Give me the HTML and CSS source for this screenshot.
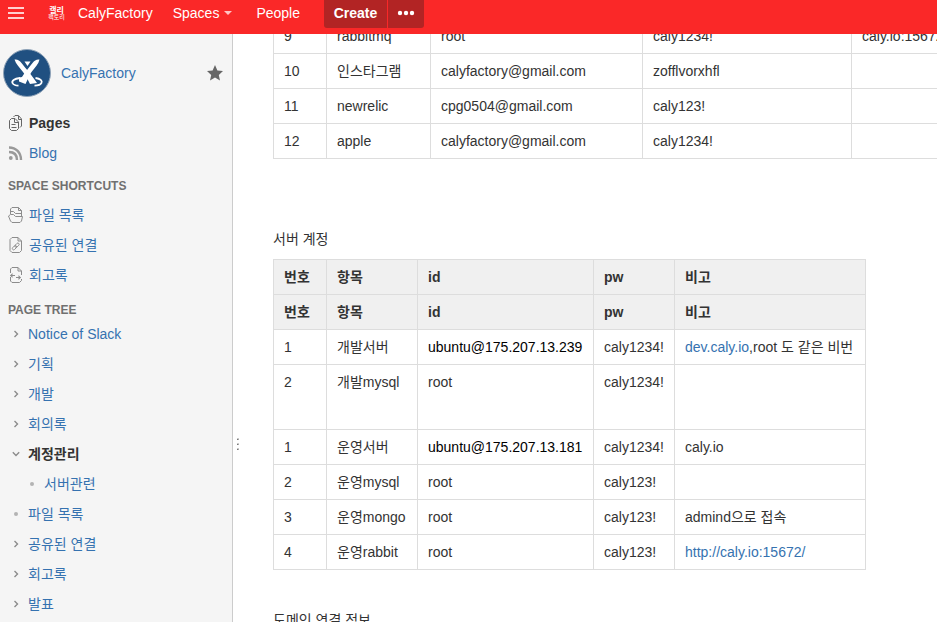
FILE: index.html
```html
<!DOCTYPE html>
<html lang="ko">
<head>
<meta charset="utf-8">
<title>계정관리 - CalyFactory</title>
<link rel="stylesheet" href="styles.css">
</head>
<body>
<svg class="defs" aria-hidden="true">
  <symbol id="chevron-right" viewBox="0 0 8 8"><path d="M2.500 1l3 3-3 3" fill="none" stroke="#8c8c8c" stroke-width="1.400"/></symbol>
  <symbol id="chevron-down" viewBox="0 0 8 8"><path d="M.8 2.300L4 5.500l3.200-3.200" fill="none" stroke="#8c8c8c" stroke-width="1.400"/></symbol>
  <symbol id="bullet" viewBox="0 0 8 8"><circle cx="4" cy="4" r="2" fill="#b3b3b3"/></symbol>
</svg>
<header class="topbar">
  <button class="menu" aria-label="Menu"><svg width="16" height="12" viewBox="0 0 16 12"><path d="M0 1h16M0 6h16M0 11h16" stroke="#ffd0d0" stroke-width="2"/></svg></button>
  <a class="brand" href="#"><span class="logo"><span class="logo-top">캘리</span><span class="logo-bottom">팩토리</span></span><span>CalyFactory</span></a>
  <a class="nav spaces" href="#">Spaces<svg width="8" height="4" viewBox="0 0 8 4"><path d="M0 0h8L4 4z" fill="#ffc4c4"/></svg></a>
  <a class="nav people" href="#">People</a>
  <div class="create-group">
    <button class="create">Create</button>
    <button class="more" aria-label="More"><svg width="18" height="6" viewBox="0 0 18 6"><g fill="#fff"><circle cx="3" cy="3" r="2.200"/><circle cx="9" cy="3" r="2.200"/><circle cx="15" cy="3" r="2.200"/></g></svg></button>
  </div>
</header>
<div class="layout">
  <aside class="sidebar">
    <div class="space">
      <svg width="48" height="48" viewBox="0 0 48 48" aria-hidden="true">
        <circle cx="24" cy="24" r="23.500" fill="#205081" stroke="#8fa3b8"/>
        <path d="M11.500 10.500c3-.5 5 1 7 3.500 4 5 9 11 13 16.500l2.500 3.500-7 1c-2-4-4-8-7-12-4-5-7-8-8.500-12.500z" fill="#fff"/>
        <path d="M36.500 10.500c-3-.5-5 1-7 3.500-4 5-8 10-10.500 14l-3 .500v4l6.500 2.500c2-4 3.500-8 6-12 4-5 7-8 8-12.500z" fill="#fff"/>
        <path d="M21.500 12.500h6l-3 4.500z" fill="#fff"/>
        <path d="M17 29c-6 .6-8.500 3-7.500 5 .8 1.800 3 2.600 6 2.700M32.500 29c5 .6 7 3 6 4.800-.8 1.800-3.500 2.700-7 2.900" fill="none" stroke="#fff" stroke-width="1.800"/>
      </svg>
      <a href="#">CalyFactory</a>
      <button class="star" aria-label="Favourite"><svg width="16" height="16" viewBox="0 0 16 16"><path d="M8 0l2.400 5.400 5.600.6-4.200 3.900L13 15.500 8 12.600l-5 2.900 1.200-5.600L0 6l5.600-.6z" fill="#666"/></svg></button>
    </div>
    <ul class="links">
      <li><svg width="15" height="16" viewBox="0 0 15 16" fill="none" stroke="#666"><path d="M3.500 3.500H7l3.500 3.500v6.500l-2 2h-5l-2-2v-8zM6.500 4v3.500H10M3.500 9.500h4M3.500 12.500h5"/><path d="M5.500 2l1.500-1.500h3.500L13.500 4v7l-1.500 1.500M10.500 1v3.500h3"/></svg><a class="current" href="#">Pages</a></li>
      <li><svg width="15" height="16" viewBox="0 0 15 16" fill="none" stroke="#999" stroke-width="2.400"><path d="M1 2.500c7 0 12 5 12 12.500M1 7c5 0 8 3 8 8"/><circle cx="2.800" cy="13" r="1.900" fill="#999" stroke="none"/></svg><a href="#">Blog</a></li>
    </ul>
    <h2 class="shortcuts-title">SPACE SHORTCUTS</h2>
    <ul class="links">
      <li><svg width="15" height="16" viewBox="0 0 15 16" fill="none" stroke="#8c8c8c"><path d="M2.500 7V2L4 .5h6.500l3 3V9M10.500.5v3h3M2.500 4.500h3l2 2h6"/><path d="M2.500 7.500h3l2 2h7l-1 4.500-1.500 1.500H4L2.500 14l-2-5z"/></svg><a href="#">파일 목록</a></li>
      <li><svg width="15" height="16" viewBox="0 0 15 16" fill="none" stroke="#8c8c8c"><path d="M4 .5h6L13.500 4v9.500l-2 2H4l-2-2v-11zM10 .5V4h3.500"/><g stroke-width=".9"><rect x="7.700" y="5.700" width="2.600" height="5" rx="1.300" transform="rotate(45 9 8.200)"/><rect x="5.200" y="8.200" width="2.600" height="5" rx="1.300" transform="rotate(45 6.500 10.700)"/></g></svg><a href="#">공유된 연결</a></li>
      <li><svg width="15" height="16" viewBox="0 0 15 16" fill="none" stroke="#8c8c8c"><path d="M2.500 6V2L4 .5h6L13.500 4v4M13.500 12v1.500l-2 2H4L2.500 14v-4M10 .5V4h3.500"/><path d="M2.500 8.500H7M8 10.500h4.500"/><path d="M4.500 6L2 8.500 4.500 11zM10.500 8l2.500 2.500-2.500 2.500z" fill="#8c8c8c" stroke="none"/></svg><a href="#">회고록</a></li>
    </ul>
    <h2 class="tree-title">PAGE TREE</h2>
    <ul class="tree">
      <li><svg><use href="#chevron-right"/></svg><a href="#">Notice of Slack</a></li>
      <li><svg><use href="#chevron-right"/></svg><a href="#">기획</a></li>
      <li><svg><use href="#chevron-right"/></svg><a href="#">개발</a></li>
      <li><svg><use href="#chevron-right"/></svg><a href="#">회의록</a></li>
      <li><svg><use href="#chevron-down"/></svg><a class="current" href="#">계정관리</a></li>
      <li class="child"><svg><use href="#bullet"/></svg><a href="#">서버관련</a></li>
      <li><svg><use href="#bullet"/></svg><a href="#">파일 목록</a></li>
      <li><svg><use href="#chevron-right"/></svg><a href="#">공유된 연결</a></li>
      <li><svg><use href="#chevron-right"/></svg><a href="#">회고록</a></li>
      <li><svg><use href="#chevron-right"/></svg><a href="#">발표</a></li>
    </ul>
  </aside>
  <div class="splitter"><svg width="2" height="12" viewBox="0 0 2 12" aria-hidden="true"><path d="M0 1.500h1M0 6.500h1M0 11.500h1" stroke="#777"/><path d="M1 1.500h1M1 6.500h1M1 11.500h1" stroke="#aaa"/><path d="M0 .5h2M0 5.500h2M0 10.500h2" stroke="#ccc"/></svg></div>
  <main class="content">
    <table class="accounts">
      <colgroup><col class="num"><col class="service"><col class="email"><col class="secret"><col class="note"></colgroup>
      <tbody>
        <tr><td>9</td><td>rabbitmq</td><td>root</td><td>caly1234!</td><td>caly.io:15672</td></tr>
        <tr><td>10</td><td>인스타그램</td><td>calyfactory@gmail.com</td><td>zofflvorxhfl</td><td></td></tr>
        <tr><td>11</td><td>newrelic</td><td>cpg0504@gmail.com</td><td>caly123!</td><td></td></tr>
        <tr><td>12</td><td>apple</td><td>calyfactory@gmail.com</td><td>caly1234!</td><td></td></tr>
      </tbody>
    </table>
    <p class="servers-title">서버 계정</p>
    <table class="servers">
      <colgroup><col class="num"><col class="item"><col class="user"><col class="pw"><col class="remark"></colgroup>
      <thead>
        <tr><th>번호</th><th>항목</th><th>id</th><th>pw</th><th>비고</th></tr>
      </thead>
      <tbody>
        <tr><th>번호</th><th>항목</th><th>id</th><th>pw</th><th>비고</th></tr>
        <tr><td>1</td><td>개발서버</td><td class="host">ubuntu@175.207.13.239</td><td>caly1234!</td><td><a href="#">dev.caly.io</a>,root 도 같은 비번</td></tr>
        <tr class="tall"><td>2</td><td>개발mysql</td><td>root</td><td>caly1234!</td><td></td></tr>
        <tr><td>1</td><td>운영서버</td><td class="host">ubuntu@175.207.13.181</td><td>caly1234!</td><td>caly.io</td></tr>
        <tr><td>2</td><td>운영mysql</td><td>root</td><td>caly123!</td><td></td></tr>
        <tr><td>3</td><td>운영mongo</td><td>root</td><td>caly123!</td><td>admind으로 접속</td></tr>
        <tr><td>4</td><td>운영rabbit</td><td>root</td><td>caly123!</td><td><a href="#">http://caly.io:15672/</a></td></tr>
      </tbody>
    </table>
    <p class="domains-title">도메인 연결 정보</p>
  </main>
</div>
</body>
</html>
```
FILE: styles.css
```css
* { box-sizing: border-box; }
body {
  margin: 0;
  height: 100vh;
  display: flex;
  flex-direction: column;
  overflow: hidden;
  background: #fff;
  color: #333;
  font: 14px/20px "Liberation Sans", "Noto Sans CJK KR", sans-serif;
}
a { color: #3572b0; text-decoration: none; }
button { margin: 0; padding: 0; border: 0; background: none; color: inherit; font: inherit; }
svg { display: block; flex: none; }
ul { list-style: none; margin: 0; padding: 0; }
h2, p { margin: 0; }
.defs { position: absolute; width: 0; height: 0; }

.topbar {
  flex: none;
  height: 34px;
  padding: 0 8px 8px;
  display: flex;
  align-items: center;
  background: #fa2828;
  color: #fff;
}
.topbar a { color: #fff; }
.menu { width: 16px; }
.brand { display: flex; align-items: center; gap: 13px; margin-left: 24px; }
.logo { display: flex; flex-direction: column; align-items: center; width: 17px; font-family: "Noto Sans CJK KR", sans-serif; }
.logo-top { font-size: 8px; line-height: 7px; font-weight: bold; }
.logo-bottom { font-size: 6px; line-height: 7px; }
.nav { display: flex; align-items: center; gap: 5px; }
.spaces { margin-left: 20px; }
.people { margin-left: 24px; }
.create-group { align-self: flex-start; display: flex; gap: 1px; height: 28px; margin-left: 24px; }
.create, .more { padding-bottom: 2px; background: #b22424; }
.create { width: 63px; border-radius: 0 0 0 3px; font-weight: bold; }
.more { width: 36px; display: flex; align-items: center; justify-content: center; border-radius: 0 0 3px 0; }

.layout { flex: 1; min-height: 0; display: flex; }
.sidebar { flex: none; width: 233px; overflow: hidden; background: #f5f5f5; border-right: 1px solid #ccc; }
.space { display: flex; align-items: center; gap: 10px; padding: 15px 9px 11px 3px; }
.star { margin-left: auto; }
.sidebar .current { color: #333; font-weight: bold; }
.sidebar h2 { padding-left: 8px; font-size: 12px; line-height: 16px; color: #707070; }
.links li { display: flex; align-items: center; gap: 6px; height: 30px; padding-left: 8px; }
.shortcuts-title { margin: 10px 0 6px; }
.tree-title { margin: 12px 0 1px; }
.tree li { display: flex; align-items: center; gap: 8px; height: 30px; padding-left: 12px; }
.tree .child { padding-left: 28px; }
.tree svg { width: 8px; height: 8px; }

.splitter { flex: none; width: 10px; display: flex; align-items: center; padding: 232px 0 0 4px; }
.content { flex: 1; min-width: 0; overflow: hidden; padding-left: 30px; }
table { table-layout: fixed; border-collapse: collapse; }
th, td { height: 35px; padding: 7px 10px; border: 1px solid #ddd; text-align: left; vertical-align: top; white-space: nowrap; }
th { background: #f0f0f0; }
.accounts { width: 688px; margin-top: -16px; }
.servers { width: 593px; }
.num { width: 53px; }
.service { width: 104px; }
.email { width: 212px; }
.secret { width: 209px; }
.note { width: 110px; }
.item { width: 91px; }
.user { width: 176px; }
.pw { width: 81px; }
.remark { width: 191px; }
.host { color: #000; }
.tall td { height: 65px; }
.servers-title { margin: 70px 0 10px; }
.domains-title { margin-top: 40px; }
```
